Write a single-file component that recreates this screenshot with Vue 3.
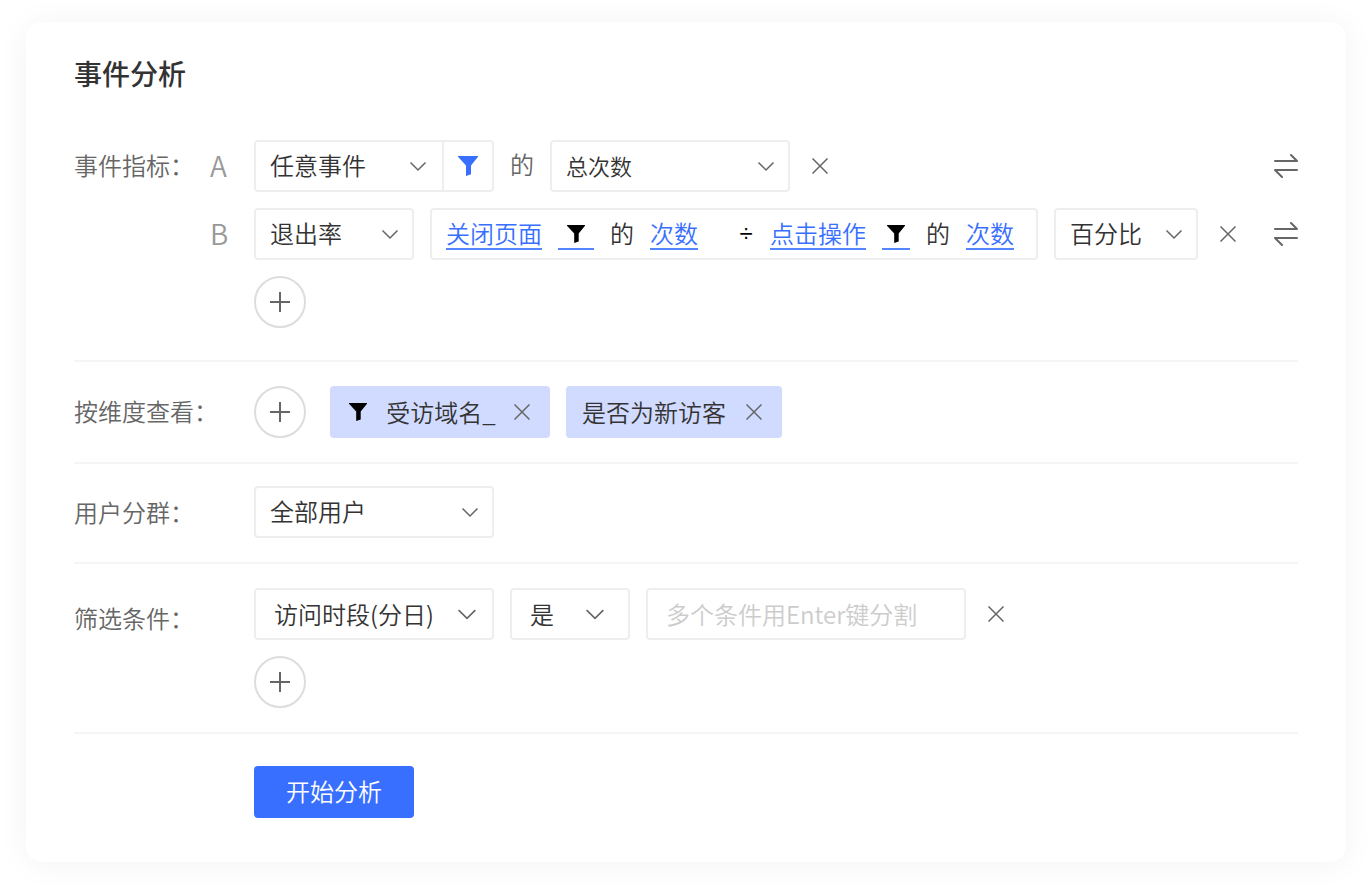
<script setup>
import { h, ref } from 'vue'

const shapes = {
  chevron: { w: 18, h: 18, d: 'M1.5 5.5 9 13l7.5-7.5', stroke: 1.5 },
  close: { w: 16, h: 16, d: 'M.5.5l15 15M15.5.5l-15 15', stroke: 1.5 },
  plus: { w: 20, h: 20, d: 'M10 0v20M0 10h20', stroke: 2 },
  swap: { w: 24, h: 24, d: 'M1 7h22l-6-6M23 16H1l7 7', stroke: 2 },
  funnel: { w: 20, h: 20, d: 'M0 0h20v.8L13 9.5v8.700L8 20V9.500L0 .8Z' }
}

const Icon = ({ name, size }) => {
  const s = shapes[name]
  return h(
    'svg',
    {
      class: 'icon',
      width: size || s.w,
      height: size || s.h,
      viewBox: `0 0 ${s.w} ${s.h}`,
      fill: s.stroke ? 'none' : 'currentColor',
      stroke: s.stroke ? 'currentColor' : 'none',
      'stroke-width': s.stroke,
      'stroke-linecap': name === 'swap' ? 'round' : 'butt',
      'stroke-linejoin': name === 'swap' ? 'round' : 'miter',
      'aria-hidden': 'true'
    },
    [h('path', { d: s.d })]
  )
}
Icon.props = ['name', 'size']

const event = ref('任意事件')
const measure = ref('总次数')
const metric = ref('退出率')
const format = ref('百分比')
const group = ref('全部用户')
const field = ref('访问时段(分日)')
const operator = ref('是')
const keyword = ref('')
</script>

<template>
  <div class="page">
    <form class="card" @submit.prevent>
      <h1 class="title">事件分析</h1>

      <section class="section section-metrics">
        <div class="label">事件指标：</div>
        <div class="rows">
          <div class="row">
            <span class="letter">A</span>
            <div class="joined">
              <span class="select">
                <select v-model="event" aria-label="事件"><option>任意事件</option></select>
                <Icon name="chevron" />
              </span>
              <button type="button" class="joined-filter" aria-label="筛选"><Icon name="funnel" /></button>
            </div>
            <span class="of">的</span>
            <span class="select boxed wide compact">
              <select v-model="measure" aria-label="统计方式"><option>总次数</option></select>
              <Icon name="chevron" />
            </span>
            <button type="button" class="close" aria-label="删除"><Icon name="close" /></button>
            <button type="button" class="swap" aria-label="切换"><Icon name="swap" /></button>
          </div>

          <div class="row">
            <span class="letter">B</span>
            <span class="select boxed metric">
              <select v-model="metric" aria-label="指标"><option>退出率</option></select>
              <Icon name="chevron" />
            </span>
            <div class="formula">
              <button type="button" class="term">关闭页面</button>
              <button type="button" class="term term-filter" aria-label="筛选"><Icon name="funnel" size="18" /></button>
              <span class="joiner">的</span>
              <button type="button" class="term">次数</button>
              <span class="divide">÷</span>
              <button type="button" class="term">点击操作</button>
              <button type="button" class="term term-filter slim" aria-label="筛选"><Icon name="funnel" size="18" /></button>
              <span class="joiner">的</span>
              <button type="button" class="term">次数</button>
            </div>
            <span class="select boxed format">
              <select v-model="format" aria-label="格式"><option>百分比</option></select>
              <Icon name="chevron" />
            </span>
            <button type="button" class="close" aria-label="删除"><Icon name="close" /></button>
            <button type="button" class="swap" aria-label="切换"><Icon name="swap" /></button>
          </div>

          <div class="row">
            <span class="letter"></span>
            <button type="button" class="add" aria-label="添加指标"><Icon name="plus" /></button>
          </div>
        </div>
      </section>

      <section class="section">
        <div class="label">按维度查看：</div>
        <div class="row indent">
          <button type="button" class="add" aria-label="添加维度"><Icon name="plus" /></button>
          <div class="tags">
            <span class="tag tag-filtered">
              <span class="tag-filter"><Icon name="funnel" size="18" /></span>
              <span>受访域名_</span>
              <button type="button" class="close" aria-label="移除"><Icon name="close" /></button>
            </span>
            <span class="tag">
              <span>是否为新访客</span>
              <button type="button" class="close" aria-label="移除"><Icon name="close" /></button>
            </span>
          </div>
        </div>
      </section>

      <section class="section section-group">
        <label class="label" for="group">用户分群：</label>
        <div class="row indent">
          <span class="select boxed wide">
            <select id="group" v-model="group"><option>全部用户</option></select>
            <Icon name="chevron" />
          </span>
        </div>
      </section>

      <section class="section section-filter">
        <label class="label" for="field">筛选条件：</label>
        <div class="rows indent">
          <div class="row">
            <span class="select boxed wide roomy">
              <select id="field" v-model="field"><option>访问时段(分日)</option></select>
              <Icon name="chevron" size="20" />
            </span>
            <span class="select boxed operator roomy">
              <select v-model="operator" aria-label="条件"><option>是</option></select>
              <Icon name="chevron" size="20" />
            </span>
            <input v-model="keyword" class="keyword" type="text" placeholder="多个条件用Enter键分割" aria-label="条件值" />
            <button type="button" class="close" aria-label="删除"><Icon name="close" /></button>
          </div>
          <div class="row">
            <button type="button" class="add" aria-label="添加条件"><Icon name="plus" /></button>
          </div>
        </div>
      </section>

      <div class="actions">
        <button type="submit" class="submit">开始分析</button>
      </div>
    </form>
  </div>
</template>

<style>
body {
  margin: 0;
  background: #fff;
}
</style>

<style scoped>
.page,
.page * {
  box-sizing: border-box;
}

.page {
  padding: 22px 22px 26px 26px;
  font-family: "Noto Sans CJK SC", sans-serif;
  font-size: 24px;
  font-weight: 350;
  line-height: 32px;
  color: #333;
}

button,
select,
input {
  margin: 0;
  padding: 0;
  border: 0;
  background: none;
  font: inherit;
  color: inherit;
}

button {
  cursor: pointer;
}

.icon {
  display: block;
  flex: none;
}

.card {
  padding: 32px 48px 44px;
  border-radius: 16px;
  background: #fff;
  box-shadow: 0 2px 32px rgba(0, 0, 0, 0.05);
}

.title {
  margin: 0 0 48px;
  font-size: 28px;
  font-weight: 500;
  line-height: 38px;
}

.section {
  display: flex;
  padding: 24px 0;
  border-bottom: 2px solid #f5f5f5;
}

.section-metrics {
  padding: 0 0 32px;
}

.section-group {
  padding-top: 22px;
}

.label {
  flex: none;
  width: 136px;
  line-height: 50px;
  color: #666;
  white-space: nowrap;
}

.section-group .label {
  line-height: 52px;
}

.section-filter .label {
  line-height: 60px;
}

.indent {
  padding-left: 44px;
}

.rows {
  display: flex;
  flex: 1;
  flex-direction: column;
  gap: 16px;
}

.row {
  display: flex;
  align-items: center;
  gap: 16px;
  white-space: nowrap;
}

.letter {
  width: 28px;
  padding-bottom: 2px;
  font-size: 28px;
  color: #999;
}

.select {
  display: grid;
  grid-template-columns: 1fr auto;
  align-items: center;
  height: 48px;
  color: #333;
}

.select select {
  grid-area: 1 / 1 / 2 / 3;
  width: 100%;
  height: 48px;
  padding: 0 0 2px 14px;
  appearance: none;
  outline: none;
}

.select .icon {
  grid-area: 1 / 2 / 2 / 3;
  margin-right: 13px;
  color: #666;
  pointer-events: none;
}

.boxed,
.joined,
.formula,
.keyword {
  border: 2px solid #eee;
  border-radius: 4px;
  height: 52px;
}

.wide {
  width: 240px;
}

.metric {
  width: 160px;
}

.format {
  width: 144px;
}

.operator {
  width: 120px;
}

.compact select {
  font-size: 22px;
}

.roomy select {
  padding: 0 0 0 18px;
}

.roomy .icon {
  margin-right: 15px;
}

.operator .icon {
  margin-right: 23px;
}

.joined {
  display: flex;
  width: 240px;
}

.joined .select {
  flex: 1;
}

.joined .select .icon {
  margin-right: 15px;
}

.joined-filter {
  display: flex;
  align-items: center;
  justify-content: center;
  width: 50px;
  border-left: 2px solid #eee;
  color: #386fff;
}

.of {
  padding-bottom: 4px;
  color: #666;
}

.joiner {
  padding-bottom: 2px;
}

.formula {
  display: flex;
  align-items: center;
  gap: 16px;
  padding: 0 22px 0 14px;
}

.term {
  height: 32px;
  border-bottom: 2px solid #5485ff;
  line-height: 28px;
  color: #386fff;
}

.term-filter {
  display: flex;
  align-items: center;
  justify-content: center;
  width: 36px;
  padding-top: 2px;
  color: #000;
}

.term-filter.slim {
  width: 28px;
}

.divide {
  width: 16px;
  margin-left: 24px;
  font-family: "Liberation Sans", sans-serif;
  text-align: center;
  color: #000;
}

.close {
  display: flex;
  align-items: center;
  justify-content: center;
  width: 28px;
  height: 28px;
  color: #666;
}

.swap {
  margin-left: auto;
  color: #666;
}

.add {
  display: flex;
  align-items: center;
  justify-content: center;
  width: 52px;
  height: 52px;
  border: 2px solid #ddd;
  border-radius: 50%;
  color: #666;
}

.tags {
  display: flex;
  gap: 16px;
  margin-left: 8px;
}

.tag {
  display: flex;
  align-items: center;
  justify-content: space-between;
  min-width: 216px;
  height: 52px;
  padding: 0 14px 0 16px;
  border-radius: 4px;
  background: #d1dbff;
}

.tag-filtered {
  width: 220px;
}

.tag-filter {
  display: flex;
  width: 28px;
  padding-left: 3px;
  color: #000;
}

.keyword {
  width: 320px;
  padding: 0 18px 2px;
  outline: none;
}

.keyword::placeholder {
  color: #ccc;
  opacity: 1;
}

.actions {
  padding: 32px 0 0 180px;
}

.submit {
  width: 160px;
  height: 52px;
  padding-bottom: 2px;
  border-radius: 4px;
  background: #386fff;
  color: #fff;
}
</style>
